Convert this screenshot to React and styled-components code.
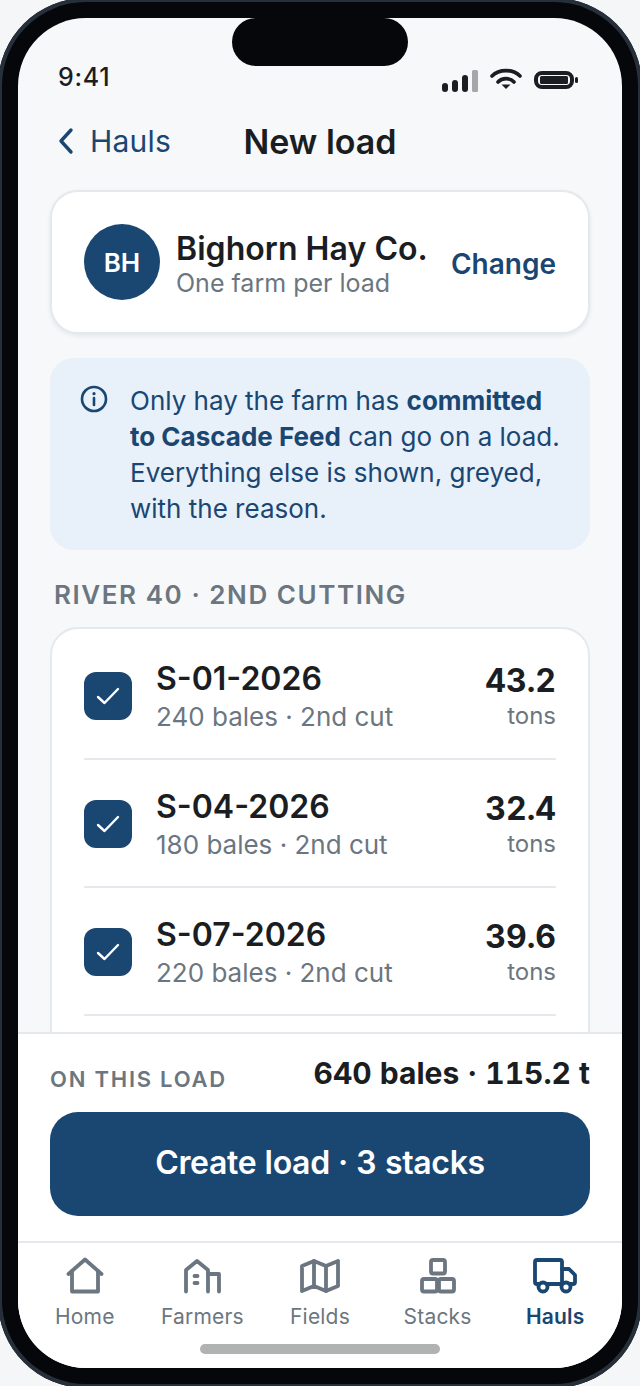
import React from "react";
import styled, { createGlobalStyle } from "styled-components";

const Global = createGlobalStyle`
  html, body { margin: 0; padding: 0; background: #f4f6f8; }
  * { box-sizing: border-box; }
  body { font-family: Inter, "Liberation Sans", sans-serif; -webkit-font-smoothing: antialiased; }
`;

const Page = styled.div`
  width: 640px;
  height: 1386px;
  overflow: hidden;
  background: #f4f6f8;
`;
const Frame = styled.div`
  position: relative;
  width: 644px;
  height: 1390px;
  margin: -2px;
  padding: 20px;
  background: #05070b;
  border-radius: 88px;
  box-shadow: inset 0 0 0 4px #262f3a;
`;
const Screen = styled.div`
  width: 604px;
  height: 1350px;
  border-radius: 68px;
  overflow: hidden;
  background: #f6f8fa;
  display: flex;
  flex-direction: column;
`;
const Notch = styled.div`
  position: absolute;
  left: 234px;
  top: 20px;
  width: 176px;
  height: 48px;
  border-radius: 24px;
  background: #05070b;
`;
const StatusBar = styled.div`
  height: 92px;
  flex: none;
  padding: 44px 44px 0 40px;
  display: flex;
  justify-content: space-between;
  align-items: flex-start;
`;
const Clock = styled.span`
  font-size: 25px;
  line-height: 30px;
  font-weight: 500;
  letter-spacing: 0.7px;
  color: #1a1d21;
`;
const StatusIcons = styled.div`
  display: flex;
  align-items: flex-start;
  gap: 12px;
  margin-top: 6px;
`;
const Header = styled.header`
  flex: none;
  height: 64px;
  position: relative;
  display: flex;
  align-items: center;
  justify-content: center;
`;
const Back = styled.div`
  position: absolute;
  left: 37px;
  top: 11px;
  display: flex;
  align-items: center;
  gap: 11px;
  font-size: 30px;
  line-height: 40px;
  letter-spacing: 0.2px;
  color: #1a4672;
`;
const Title = styled.h1`
  margin: 0;
  font-size: 34px;
  line-height: 40px;
  font-weight: 600;
  color: #1a1d21;
`;
const Scroll = styled.main`
  flex: 1;
  min-height: 0;
  overflow: hidden;
  padding: 16px 32px 0;
  display: flex;
  flex-direction: column;
`;
const FarmCard = styled.section`
  flex: none;
  height: 144px;
  padding: 0 32px;
  display: flex;
  align-items: center;
  background: #fff;
  border: 2px solid #e5e8ec;
  border-radius: 28px;
  box-shadow: 0 2px 4px rgba(20, 30, 45, 0.08);
`;
const Avatar = styled.div`
  flex: none;
  width: 76px;
  height: 76px;
  border-radius: 50%;
  background: #1a4672;
  color: #fff;
  font-size: 26px;
  font-weight: 600;
  display: flex;
  align-items: center;
  justify-content: center;
`;
const FarmText = styled.div`
  flex: 1;
  margin: 4px 0 0 16px;
`;
const FarmName = styled.div`
  font-size: 32px;
  line-height: 38px;
  font-weight: 600;
  letter-spacing: 0.05px;
  color: #1a1d21;
  white-space: nowrap;
  position: relative;
  top: 1px;
`;
const FarmSub = styled.div`
  font-size: 25px;
  line-height: 32px;
  color: #6b7680;
`;
const Change = styled.div`
  font-size: 28px;
  font-weight: 600;
  margin-top: 3px;
  color: #1a4672;
`;
const Info = styled.section`
  flex: none;
  margin-top: 24px;
  height: 192px;
  padding: 25px 30px;
  display: flex;
  gap: 22px;
  background: #e8f0fa;
  border-radius: 24px;
`;
const InfoText = styled.p`
  margin: 0;
  font-size: 26px;
  line-height: 36px;
  color: #1a4672;
  white-space: nowrap;
  b { font-weight: 700; }
`;
const SectionLabel = styled.div`
  flex: none;
  margin: 27px 0 0 4px;
  height: 36px;
  font-size: 26px;
  line-height: 36px;
  font-weight: 600;
  letter-spacing: 1.56px;
  color: #6b7680;
`;
const ListCard = styled.section`
  flex: none;
  margin-top: 14px;
  padding: 3px 32px 200px;
  background: #fff;
  border: 2px solid #e5e8ec;
  border-radius: 28px;
`;
const Row = styled.div`
  height: 128px;
  padding-top: 2px;
  display: flex;
  align-items: center;
  border-bottom: 2px solid #e5e8ec;
`;
const Check = styled.div`
  flex: none;
  width: 48px;
  height: 48px;
  border-radius: 12px;
  background: #1a4672;
  display: flex;
  align-items: center;
  justify-content: center;
`;
const RowMain = styled.div`
  flex: 1;
  margin: 2px 0 0 24px;
`;
const StackId = styled.div`
  font-size: 32px;
  line-height: 40px;
  font-weight: 600;
  color: #1a1d21;
`;
const StackMeta = styled.div`
  font-size: 26px;
  line-height: 36px;
  color: #6b7680;
`;
const RowAmount = styled.div`
  text-align: right;
`;
const Tons = styled.div`
  font-size: 32px;
  line-height: 40px;
  font-weight: 700;
  font-variant-numeric: tabular-nums;
  color: #1a1d21;
`;
const Unit = styled.div`
  font-size: 24px;
  line-height: 31px;
  margin-top: -1px;
  color: #6b7680;
`;
const Footer = styled.section`
  flex: none;
  height: 209px;
  padding: 20px 32px 0;
  background: #fff;
  border-top: 2px solid #e5e8ec;
`;
const Summary = styled.div`
  display: flex;
  align-items: center;
  justify-content: space-between;
  height: 40px;
`;
const SummaryLabel = styled.span`
  font-size: 22px;
  font-weight: 600;
  letter-spacing: 1.76px;
  color: #6b7680;
  margin-top: 10px;
`;
const SummaryValue = styled.span`
  font-size: 30px;
  line-height: 38px;
  font-weight: 700;
  font-variant-numeric: tabular-nums;
  margin-top: -2px;
  color: #1a1d21;
`;
const CreateButton = styled.button`
  display: block;
  width: 100%;
  height: 104px;
  margin-top: 18px;
  padding: 0 0 4px;
  border: 0;
  border-radius: 28px;
  background: #1a4672;
  color: #fff;
  font: 600 32px Inter, sans-serif;
  font-variant-numeric: tabular-nums;
  letter-spacing: -0.32px;
`;
const Nav = styled.nav`
  flex: none;
  position: relative;
  height: 127px;
  padding: 9px 8px 0;
  background: #fff;
  border-top: 2px solid #e5e8ec;
  display: grid;
  grid-template-columns: repeat(5, 1fr);
  align-content: start;
`;
const NavItem = styled.div`
  display: flex;
  flex-direction: column;
  align-items: center;
  font-size: 21px;
  line-height: 32px;
  letter-spacing: 0.2px;
  font-weight: ${(p) => (p.$active ? 600 : 400)};
  color: ${(p) => (p.$active ? "#1a4672" : "#6b7680")};
  svg { display: block; margin-bottom: 1px; }
`;
const HomeBar = styled.div`
  position: absolute;
  left: 182px;
  bottom: 14px;
  width: 240px;
  height: 10px;
  border-radius: 5px;
  background: #b1b3b3;
`;

const NavIcon = ({ children }) => (
  <svg width="48" height="48" viewBox="0 0 48 48" fill="none" stroke="currentColor" strokeWidth="3.8" strokeLinecap="round" strokeLinejoin="round">
    {children}
  </svg>
);

const items = [
  ["Home", <><path d="M7.500 22 24 7.500 40.500 22" /><path d="M11 19v20.500h26V19" /></>],
  ["Farmers", <><path d="M8 39.500V18l11-9 11 9v21.500" /><path d="M30 22h11v17.500" /><path d="M16.500 24h3M16.500 31h3" /></>],
  ["Fields", <><path d="M6 14l12-5 12 5 12-5v25l-12 5-12-5-12 5z" /><path d="M18 9v25M30 14v25" /></>],
  ["Stacks", <><rect x="17" y="8" width="14" height="13.500" rx="2" /><rect x="8" y="27" width="15" height="12.500" rx="2" /><rect x="25" y="27" width="15" height="12.500" rx="2" /></>],
  ["Hauls", <><rect x="4" y="8" width="27" height="24" rx="2" /><path d="M31 17h7l6 6v7a2 2 0 0 1-2 2H31" /><circle cx="12" cy="35" r="4.500" fill="#fff" /><circle cx="35" cy="35" r="4.500" fill="#fff" /></>],
];

const rows = [
  ["S-01-2026", "240 bales · 2nd cut", "43.2"],
  ["S-04-2026", "180 bales · 2nd cut", "32.4"],
  ["S-07-2026", "220 bales · 2nd cut", "39.6"],
];

export default function App() {
  return (
    <Page>
      <Global />
      <Frame>
        <Screen>
          <StatusBar>
            <Clock>9:41</Clock>
            <StatusIcons>
              <svg width="36" height="26" viewBox="0 0 36 26">
                <rect x="0" y="15" width="6" height="9" rx="3" fill="#1a1d21" />
                <rect x="10" y="12" width="6" height="12" rx="3" fill="#1a1d21" />
                <rect x="20" y="7" width="6" height="17" rx="3" fill="#1a1d21" />
                <rect x="30" y="2" width="6" height="22" rx="1.500" fill="#a5a7a9" />
              </svg>
              <svg width="32" height="26" viewBox="0 0 32 26" fill="none" stroke="#1a1d21" strokeWidth="3.600" strokeLinecap="round">
                <path d="M2 8C9 .8 23 .8 30 8" />
                <path d="M8 14c4-4.500 12-4.500 16 0" />
                <path d="M11.500 16.500h9l-4.500 4.500z" fill="#1a1d21" stroke="none" />
              </svg>
              <svg width="44" height="26" viewBox="0 0 44 26" style={{ marginTop: 2 }}>
                <rect x="2" y="3" width="36" height="14" rx="6" fill="none" stroke="#1a1d21" strokeWidth="4" />
                <rect x="6" y="6" width="28" height="8" rx="1.500" fill="#1a1d21" />
                <rect x="41" y="7" width="3" height="6" rx="1.500" fill="#1a1d21" />
              </svg>
            </StatusIcons>
          </StatusBar>
          <Header>
            <Back>
              <svg width="24" height="32" viewBox="0 0 24 32" fill="none" stroke="#1a4672" strokeWidth="3.400" strokeLinecap="round" strokeLinejoin="round">
                <path d="M16 5 6 16l10 11" />
              </svg>
              Hauls
            </Back>
            <Title>New load</Title>
          </Header>
          <Scroll>
            <FarmCard>
              <Avatar>BH</Avatar>
              <FarmText>
                <FarmName>Bighorn Hay Co.</FarmName>
                <FarmSub>One farm per load</FarmSub>
              </FarmText>
              <Change>Change</Change>
            </FarmCard>
            <Info>
              <svg width="28" height="28" viewBox="0 0 28 28" fill="none" stroke="#1a4672" strokeWidth="2.600" strokeLinecap="round" style={{ flex: "none", marginTop: 2 }}>
                <circle cx="14" cy="14" r="12" />
                <path d="M14 13v7" />
                <path d="M14 8.500v.2" strokeWidth="3.200" />
              </svg>
              <InfoText>
                Only hay the farm has <b>committed</b>
                <br />
                <b>to Cascade Feed</b> can go on a load.
                <br />
                Everything else is shown, greyed,
                <br />
                with the reason.
              </InfoText>
            </Info>
            <SectionLabel>RIVER 40 · 2ND CUTTING</SectionLabel>
            <ListCard>
              {rows.map(([id, meta, tons]) => (
                <Row key={id}>
                  <Check>
                    <svg width="24" height="24" viewBox="0 0 24 24" fill="none" stroke="#fff" strokeWidth="2.400" strokeLinecap="round" strokeLinejoin="round">
                      <path d="M2 13l6.500 6L22 5" />
                    </svg>
                  </Check>
                  <RowMain>
                    <StackId>{id}</StackId>
                    <StackMeta>{meta}</StackMeta>
                  </RowMain>
                  <RowAmount>
                    <Tons>{tons}</Tons>
                    <Unit>tons</Unit>
                  </RowAmount>
                </Row>
              ))}
            </ListCard>
          </Scroll>
          <Footer>
            <Summary>
              <SummaryLabel>ON THIS LOAD</SummaryLabel>
              <SummaryValue>640 bales · 115.2 t</SummaryValue>
            </Summary>
            <CreateButton>Create load · 3 stacks</CreateButton>
          </Footer>
          <Nav>
            {items.map(([label, icon]) => (
              <NavItem key={label} $active={label === "Hauls"}>
                <NavIcon>{icon}</NavIcon>
                {label}
              </NavItem>
            ))}
            <HomeBar />
          </Nav>
        </Screen>
        <Notch />
      </Frame>
    </Page>
  );
}
